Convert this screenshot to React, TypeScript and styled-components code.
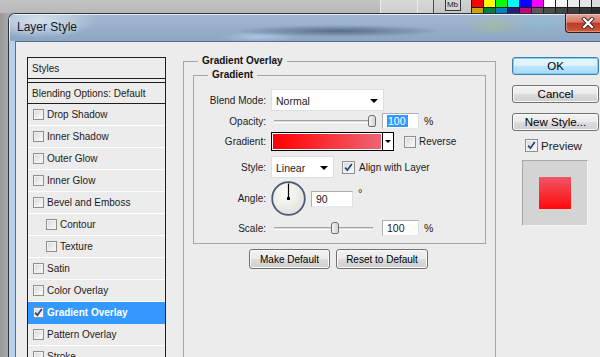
import styled, { createGlobalStyle } from "styled-components";

const GlobalStyle = createGlobalStyle`
  html, body { margin: 0; padding: 0; background: #aaaaaa; }
  * { box-sizing: border-box; }
`;

const Screen = styled.div`
  width: 600px;
  height: 357px;
  overflow: hidden;
  display: flex;
  flex-direction: column;
  background: linear-gradient(to right, #9a9a9a 0px, #a9a9a9 8px);
  font-family: "Liberation Sans", Arial, sans-serif;
  font-size: 10px;
  color: #1b1b1b;
`;

const TopStrip = styled.div`
  height: 13px;
  flex: none;
  display: flex;
  padding-left: 380px;
  background: linear-gradient(to bottom, #c3c3c3, #b8b8b8);
`;

const ToolCell = styled.div<{ $w: number; $light?: boolean }>`
  width: ${(p) => p.$w}px;
  flex: none;
  display: flex;
  justify-content: center;
  border-left: 1px solid ${(p) => (p.$light ? "#ececec" : "#4a4a4a")};
  background: ${(p) =>
    p.$light
      ? "linear-gradient(#dadada, #cdcdcd)"
      : "linear-gradient(#d2d2d2, #c6c6c6)"};
`;

const MbIcon = styled.span`
  width: 16px;
  height: 11px;
  border: 1px solid #363636;
  border-top: none;
  background: #d4d4d4;
  font-size: 8px;
  line-height: 10px;
  text-align: center;
  color: #222;
`;

const Swatches = styled.div`
  display: grid;
  grid-template-columns: repeat(11, 11px);
  grid-template-rows: 7px 5px;
  gap: 1px;
  padding-left: 1px;
  background: #1c1c1c;
  flex: none;
`;

const Swatch = styled.span<{ $c: string }>`
  background: ${(p) => p.$c};
`;

const Window = styled.div`
  flex: 1;
  margin-left: 8px;
  display: flex;
  flex-direction: column;
  border-top: 1px solid #2c3440;
  border-left: 1px solid #2c3440;
  border-top-left-radius: 7px;
  overflow: hidden;
  background: #bed5ec;
`;

const TitleBar = styled.div`
  height: 27px;
  flex: none;
  display: flex;
  justify-content: space-between;
  align-items: flex-start;
  padding-left: 8px;
  box-shadow: inset 1px 1px 0 rgba(255, 255, 255, 0.75);
  background:
    radial-gradient(ellipse 105px 6px at 330px 17px, rgba(78, 96, 122, 0.85), transparent),
    radial-gradient(ellipse 40px 5px at 250px 23px, rgba(178, 206, 236, 0.8), transparent),
    radial-gradient(ellipse 28px 10px at 485px 12px, rgba(170, 200, 120, 0.45), transparent),
    radial-gradient(ellipse 28px 10px at 530px 10px, rgba(120, 200, 200, 0.35), transparent),
    radial-gradient(ellipse 60px 18px at 30px 6px, rgba(235, 243, 250, 0.7), transparent),
    linear-gradient(to bottom, #a2b8d0, #8ca6c3);
`;

const Title = styled.span`
  font-size: 12px;
  line-height: 27px;
  color: #111a24;
  text-shadow: 0 0 6px rgba(255, 255, 255, 0.7);
`;

const CloseButton = styled.div`
  width: 45px;
  height: 19px;
  margin-right: -10px;
  display: flex;
  align-items: center;
  justify-content: center;
  border: 1px solid #3c1812;
  border-top: none;
  border-radius: 0 0 4px 4px;
  background: linear-gradient(#e6a596 0%, #d27a66 45%, #c03a22 52%, #cc5a3c 100%);
  box-shadow: inset 0 0 0 1px rgba(255, 255, 255, 0.35);
`;

const Body = styled.div`
  flex: 1;
  display: flex;
  padding-left: 6px;
  background: linear-gradient(to right, #b9d2ec, #c8dff5);
`;

const Client = styled.div`
  flex: 1;
  display: flex;
  align-items: flex-start;
  padding: 15px 0 0 11px;
  background: #ececec;
  border-top: 1px solid #5b6d82;
  border-left: 1px solid #5b6d82;
`;

/* ---- styles list ---- */

const StylesPanel = styled.div`
  width: 139px;
  flex: none;
  border: 1px solid #1e1e1e;
`;

const PanelHeader = styled.div`
  height: 21px;
  padding-left: 4px;
  display: flex;
  align-items: center;
  border-bottom: 1px solid #1e1e1e;
  margin-bottom: 3px;
`;

const BlendRow = styled.div`
  height: 22px;
  padding-left: 4px;
  display: flex;
  align-items: center;
  border-top: 1px solid #1e1e1e;
  border-bottom: 1px solid #1e1e1e;
  color: #2a1a0a;
`;

const ListRow = styled.div<{ $indent?: boolean; $active?: boolean }>`
  height: 22px;
  display: flex;
  align-items: center;
  gap: 3px;
  padding-left: ${(p) => (p.$indent ? 18 : 5)}px;
  border-bottom: 1px solid ${(p) => (p.$active ? "#3399ff" : "#ffffff")};
  background: ${(p) => (p.$active ? "#3399ff" : "transparent")};
  color: ${(p) => (p.$active ? "#ffffff" : "#1b1b1b")};
  font-weight: ${(p) => (p.$active ? 700 : 400)};
`;

const CheckBox = styled.span<{ $size?: number }>`
  width: ${(p) => p.$size ?? 11}px;
  height: ${(p) => p.$size ?? 11}px;
  flex: none;
  display: inline-flex;
  align-items: center;
  justify-content: center;
  border: 1px solid #8e8f8f;
  background: linear-gradient(135deg, #d6d6d6 0%, #eeeeee 60%, #fbfbfb 100%);
  box-shadow: inset 0 0 0 1px #f3f3f3;
`;

/* ---- center panel ---- */

const Group = styled.div<{ $w: number; $h: number; $ml?: number; $mt?: number }>`
  position: relative;
  flex: none;
  width: ${(p) => p.$w}px;
  height: ${(p) => p.$h}px;
  margin-left: ${(p) => p.$ml ?? 0}px;
  margin-top: ${(p) => p.$mt ?? 0}px;
  border: 1px solid #a6a6a6;
`;

const OuterContent = styled.div`
  padding: 13px 0 0 9px;
`;

const Legend = styled.span`
  position: absolute;
  top: -7px;
  left: 14px;
  padding: 0 4px;
  line-height: 12px;
  font-weight: 700;
  color: #111;
  background: #ececec;
`;

const Row = styled.div<{ $h: number; $mt: number }>`
  display: flex;
  align-items: center;
  height: ${(p) => p.$h}px;
  margin-top: ${(p) => p.$mt}px;
`;

const Label = styled.span`
  width: 72px;
  flex: none;
  text-align: right;
  margin-right: 5px;
`;

const Select = styled.div<{ $w: number }>`
  width: ${(p) => p.$w}px;
  height: 22px;
  flex: none;
  display: flex;
  align-items: center;
  justify-content: space-between;
  padding: 1px 5px 0 4px;
  border: 1px solid #dedede;
  background: #ffffff;
  font-size: 10.5px;
`;

const Arrow = styled.span`
  width: 0;
  height: 0;
  border-left: 4px solid transparent;
  border-right: 4px solid transparent;
  border-top: 4px solid #000;
`;

const Slider = styled.div`
  position: relative;
  width: 106px;
  height: 100%;
  flex: none;
`;

const Track = styled.div`
  position: absolute;
  left: 3px;
  right: 4px;
  top: 7px;
  height: 3px;
  border-top: 1px solid #a4a4a4;
  border-bottom: 1px solid #ffffff;
  background: #d8d8d8;
`;

const Thumb = styled.div`
  position: absolute;
  top: 2px;
  width: 8px;
  height: 12px;
  border: 1px solid #6f6f6f;
  border-radius: 3px 3px 2px 2px;
  background: linear-gradient(to right, #f6f6f6, #d2d2d2);
`;

const NumBox = styled.div<{ $w: number; $ml: number }>`
  width: ${(p) => p.$w}px;
  height: 16px;
  flex: none;
  margin-left: ${(p) => p.$ml}px;
  padding-left: 4px;
  display: flex;
  align-items: center;
  border: 1px solid #abadb3;
  border-bottom-color: #e3e9ef;
  border-right-color: #dbdfe6;
  background: #ffffff;
  font-size: 10.5px;
`;

const Selected = styled.span`
  background: #3399ff;
  color: #ffffff;
  line-height: 12px;
  padding: 0 1px;
  border-right: 1px solid #e0701c;
`;

const Unit = styled.span<{ $ml: number }>`
  margin-left: ${(p) => p.$ml}px;
  font-size: 10.5px;
`;

const Degree = styled.span`
  margin-left: 5px;
  align-self: flex-start;
  margin-top: 6px;
  font-size: 11px;
`;

const GradientBar = styled.div`
  width: 123px;
  height: 19px;
  flex: none;
  display: flex;
  border: 1px solid #000;
  background: #ffffff;
`;

const GradientFill = styled.div`
  flex: 1;
  margin: 1px;
  background: linear-gradient(to right, #ff0000, #ef6473);
`;

const GradientDrop = styled.div`
  width: 11px;
  display: flex;
  align-items: center;
  justify-content: center;
  border-left: 1px solid #000;
`;

const SmallArrow = styled.span`
  width: 0;
  height: 0;
  border-left: 3px solid transparent;
  border-right: 3px solid transparent;
  border-top: 3px solid #000;
`;

const CheckLabel = styled.span<{ $ml: number }>`
  margin-left: ${(p) => p.$ml}px;
`;

const Spaced = styled.span<{ $ml: number }>`
  display: inline-flex;
  margin-left: ${(p) => p.$ml}px;
`;

const ButtonRow = styled.div`
  width: 293px;
  padding-right: 2px;
  margin-top: 5px;
  display: flex;
  justify-content: center;
  gap: 6px;
`;

const Button = styled.div<{ $w?: number; $h?: number; $default?: boolean; $big?: boolean }>`
  width: ${(p) => (p.$w ? `${p.$w}px` : "auto")};
  height: ${(p) => p.$h ?? 20}px;
  display: flex;
  align-items: center;
  justify-content: center;
  border: 1px solid ${(p) => (p.$default ? "#3c7fb1" : "#707070")};
  border-radius: 3px;
  font-size: ${(p) => (p.$big ? 11.5 : 10)}px;
  color: #000;
  background: ${(p) =>
    p.$default
      ? "linear-gradient(#eaf6fd 0%, #d9f0fc 50%, #bee6fd 50%, #a7d9f5 100%)"
      : "linear-gradient(#f2f2f2 0%, #ebebeb 50%, #dddddd 50%, #cfcfcf 100%)"};
  box-shadow: inset 0 0 0 1px ${(p) => (p.$default ? "#7ed0f5" : "#fbfbfb")};
`;

/* ---- right column ---- */

const RightColumn = styled.div`
  width: 87px;
  flex: none;
  margin-left: 16px;
  display: flex;
  flex-direction: column;
  gap: 10px;
`;

const PreviewRow = styled.div`
  display: flex;
  align-items: center;
  height: 13px;
  margin-top: -2px;
  padding-left: 13px;
  font-size: 11.5px;
`;

const PreviewBox = styled.div`
  width: 66px;
  height: 66px;
  margin: -2px 0 0 10px;
  display: flex;
  align-items: center;
  justify-content: center;
  border: 1px solid #a8a8a8;
  border-right-color: #f4f4f4;
  border-bottom-color: #f4f4f4;
  background: #d4d4d4;
`;

const PreviewSwatch = styled.div`
  width: 32px;
  height: 32px;
  background: linear-gradient(to bottom, #f05567, #ff0a0a);
`;

const Tick = () => (
  <svg width="9" height="9" viewBox="0 0 9 9">
    <path d="M1.2 4.6 L3.4 7.2 L7.8 1" fill="none" stroke="#27407c" strokeWidth="1.7" />
  </svg>
);

const Check = ({ checked, size }: { checked?: boolean; size?: number }) => (
  <CheckBox $size={size}>{checked ? <Tick /> : null}</CheckBox>
);

const Dial = () => (
  <svg width="35" height="35" viewBox="0 0 35 35" style={{ flex: "none" }}>
    <defs>
      <radialGradient id="dialFill" cx="40%" cy="35%" r="70%">
        <stop offset="0" stopColor="#fdfdfb" />
        <stop offset="1" stopColor="#e0e0da" />
      </radialGradient>
    </defs>
    <circle cx="17.5" cy="17.5" r="16.3" fill="url(#dialFill)" stroke="#4d5a78" strokeWidth="1.8" />
    <line x1="17.5" y1="17.5" x2="17.5" y2="2.5" stroke="#000" strokeWidth="1.2" />
    <rect x="16" y="16" width="3" height="3" fill="#000" />
  </svg>
);

const CloseX = () => (
  <svg width="14" height="12" viewBox="0 0 14 12">
    <path d="M3 2 L11 10 M11 2 L3 10" stroke="#3a2a28" strokeWidth="4" strokeLinecap="square" />
    <path d="M3 2 L11 10 M11 2 L3 10" stroke="#ffffff" strokeWidth="2.2" strokeLinecap="square" />
  </svg>
);

const topRow = ["#ff0000", "#ffff00", "#00ff00", "#00ffff", "#0000ff", "#ff00ff", "#ffffff", "#f4f4f4", "#ececec", "#e4e4e4", "#dcdcdc"];
const bottomRow = ["#c8a800", "#007f3f", "#0080c0", "#20207a", "#c00078", "#5a5a5a", "#4c4c4c", "#444444", "#3c3c3c", "#343434", "#2c2c2c"];

const styleItems = [
  { label: "Drop Shadow" },
  { label: "Inner Shadow" },
  { label: "Outer Glow" },
  { label: "Inner Glow" },
  { label: "Bevel and Emboss" },
  { label: "Contour", indent: true },
  { label: "Texture", indent: true },
  { label: "Satin" },
  { label: "Color Overlay" },
  { label: "Gradient Overlay", active: true },
  { label: "Pattern Overlay" },
  { label: "Stroke" },
];

// slider value (0..1) -> thumb offset inside the 106px slider
const thumbLeft = (v: number) => Math.round(3 + v * 94);

export default function App() {
  return (
    <Screen>
      <GlobalStyle />
      <TopStrip>
        <ToolCell $w={37} $light />
        <ToolCell $w={16} $light />
        <ToolCell $w={38}>
          <MbIcon>Mb</MbIcon>
        </ToolCell>
        <Swatches>
          {topRow.map((c, i) => (
            <Swatch key={"t" + i} $c={c} />
          ))}
          {bottomRow.map((c, i) => (
            <Swatch key={"b" + i} $c={c} />
          ))}
        </Swatches>
      </TopStrip>

      <Window>
        <TitleBar>
          <Title>Layer Style</Title>
          <CloseButton>
            <CloseX />
          </CloseButton>
        </TitleBar>

        <Body>
          <Client>
            <StylesPanel>
              <PanelHeader>Styles</PanelHeader>
              <BlendRow>Blending Options: Default</BlendRow>
              {styleItems.map((s) => (
                <ListRow key={s.label} $indent={s.indent} $active={s.active}>
                  <Check checked={s.active} />
                  <span>{s.label}</span>
                </ListRow>
              ))}
            </StylesPanel>

            <Group $w={313} $h={400} $ml={17} $mt={4}>
              <Legend>Gradient Overlay</Legend>
              <OuterContent>
                <Group $w={293} $h={169}>
                  <Legend>Gradient</Legend>
                  <Row $h={22} $mt={13}>
                    <Label>Blend Mode:</Label>
                    <Select $w={113}>
                      Normal
                      <Arrow />
                    </Select>
                  </Row>
                  <Row $h={16} $mt={2}>
                    <Label>Opacity:</Label>
                    <Slider>
                      <Track />
                      <Thumb style={{ left: thumbLeft(1) }} />
                    </Slider>
                    <NumBox $w={37} $ml={5}>
                      <Selected>100</Selected>
                    </NumBox>
                    <Unit $ml={5}>%</Unit>
                  </Row>
                  <Row $h={19} $mt={3}>
                    <Label>Gradient:</Label>
                    <GradientBar>
                      <GradientFill />
                      <GradientDrop>
                        <SmallArrow />
                      </GradientDrop>
                    </GradientBar>
                    <Spaced $ml={10}>
                      <Check size={12} />
                    </Spaced>
                    <CheckLabel $ml={3}>Reverse</CheckLabel>
                  </Row>
                  <Row $h={22} $mt={5}>
                    <Label>Style:</Label>
                    <Select $w={63}>
                      Linear
                      <Arrow />
                    </Select>
                    <Spaced $ml={8}>
                      <Check size={13} checked />
                    </Spaced>
                    <CheckLabel $ml={4}>Align with Layer</CheckLabel>
                  </Row>
                  <Row $h={35} $mt={3}>
                    <Label>Angle:</Label>
                    <Dial />
                    <NumBox $w={42} $ml={5}>
                      90
                    </NumBox>
                    <Degree>°</Degree>
                  </Row>
                  <Row $h={16} $mt={4}>
                    <Label>Scale:</Label>
                    <Slider>
                      <Track />
                      <Thumb style={{ left: thumbLeft(0.61) }} />
                    </Slider>
                    <NumBox $w={37} $ml={5}>
                      100
                    </NumBox>
                    <Unit $ml={5}>%</Unit>
                  </Row>
                </Group>
                <ButtonRow>
                  <Button $w={81}>Make Default</Button>
                  <Button $w={92}>Reset to Default</Button>
                </ButtonRow>
              </OuterContent>
            </Group>

            <RightColumn>
              <Button $h={18} $default $big>
                OK
              </Button>
              <Button $h={18} $big>
                Cancel
              </Button>
              <Button $h={18} $big>
                New Style...
              </Button>
              <PreviewRow>
                <Check size={13} checked />
                <CheckLabel $ml={3}>Preview</CheckLabel>
              </PreviewRow>
              <PreviewBox>
                <PreviewSwatch />
              </PreviewBox>
            </RightColumn>
          </Client>
        </Body>
      </Window>
    </Screen>
  );
}
